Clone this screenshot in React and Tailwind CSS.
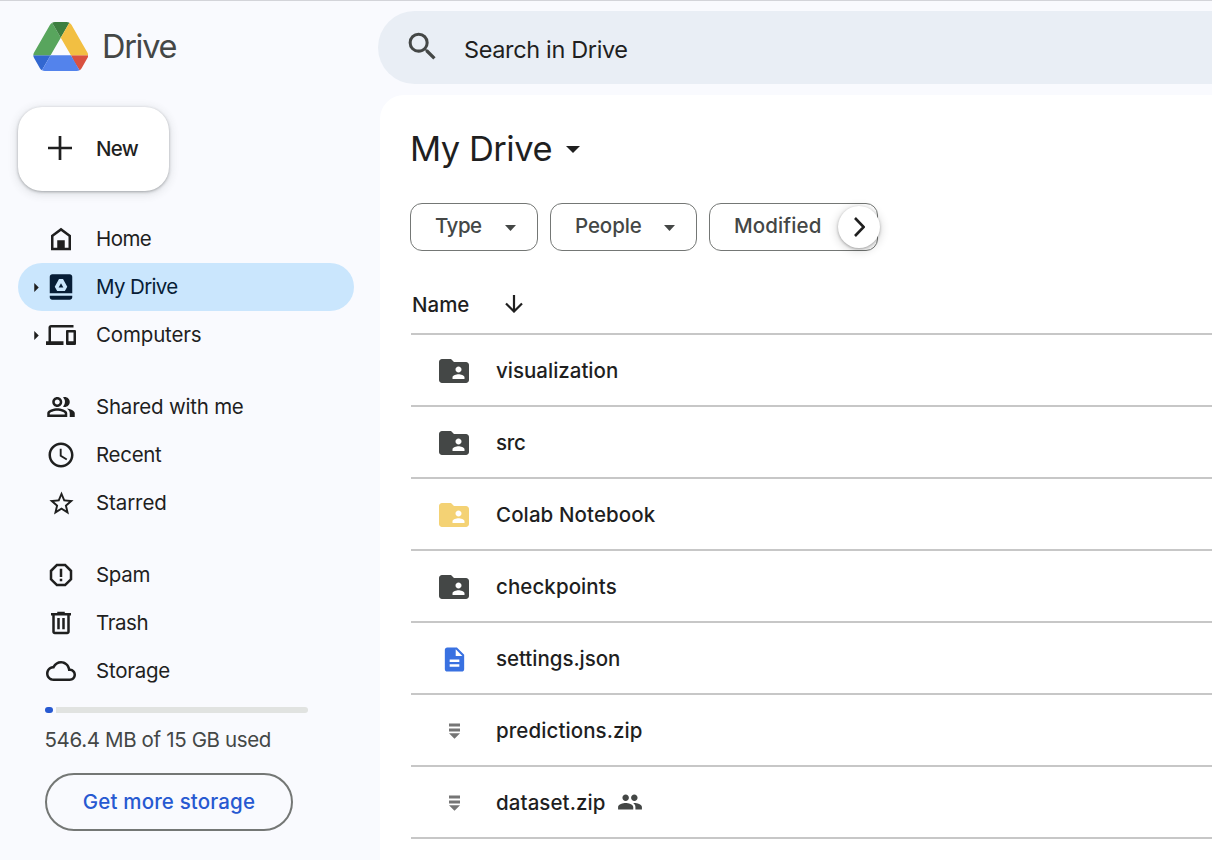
import React from "react";

const ICONS = {
  home: "M12 3L4 9v12h16V9l-8-6zm6 16h-3v-6H9v6H6v-9l6-4.5 6 4.5v9z",
  drive:
    "M5 1.8h14c1.1 0 2 .9 2 2V17H3V3.800c0-1.1.9-2 2-2zM10.400 5.500L7 11.700l1.900 3.400h6.200l1.900-3.400-3.400-6.200h-3.200zM12 9l1.900 3.400h-3.800L12 9zM3 18.900h18v1.200c0 1.100-.9 2-2 2H5c-1.100 0-2-.9-2-2v-1.200z",
  computers:
    "M4 6h18V4H4c-1.1 0-2 .9-2 2v11H0v3h14v-3H4V6zm19 2h-6c-.55 0-1 .45-1 1v10c0 .55.45 1 1 1h6c.55 0 1-.45 1-1V9c0-.55-.45-1-1-1zm-1 9h-4v-7h4v7z",
  shared:
    "M15 12c2.210 0 4-1.790 4-4s-1.790-4-4-4c-.47 0-.91.1-1.330.24a5.980 5.980 0 0 1 0 7.520c.42.14.86.24 1.330.24zM16.660 13.130C18.030 14.060 19 15.320 19 17v3h4v-3c0-2.180-3.580-3.470-6.340-3.870zM9 12c2.210 0 4-1.790 4-4s-1.790-4-4-4-4 1.790-4 4 1.790 4 4 4zm0-6c1.100 0 2 .9 2 2s-.9 2-2 2-2-.9-2-2 .9-2 2-2zM9 13c-2.670 0-8 1.340-8 4v3h16v-3c0-2.660-5.330-4-8-4zm6 5H3v-.99C3.200 16.290 6.300 15 9 15s5.800 1.290 6 2v1z",
  recent:
    "M11.990 2C6.470 2 2 6.480 2 12s4.470 10 9.990 10C17.520 22 22 17.520 22 12S17.520 2 11.990 2zM12 20c-4.420 0-8-3.580-8-8s3.580-8 8-8 8 3.580 8 8-3.580 8-8 8zm.5-13H11v6l5.250 3.150.75-1.230-4.500-2.670z",
  starred:
    "M22 9.240l-7.190-.62L12 2 9.190 8.630 2 9.240l5.460 4.730L5.820 21 12 17.270 18.180 21l-1.630-7.030L22 9.240zM12 15.400l-3.760 2.270 1-4.280-3.320-2.880 4.380-.38L12 6.100l1.710 4.040 4.380.38-3.320 2.880 1 4.280L12 15.400z",
  spam: "M15.730 3H8.270L3 8.270v7.460L8.270 21h7.460L21 15.730V8.270L15.730 3zM19 14.900L14.900 19H9.100L5 14.900V9.100L9.100 5h5.800L19 9.100v5.800zM11 7h2v6.500h-2zM11 15h2v2h-2z",
  trash:
    "M15 4V3H9v1H4v2h1v13c0 1.100.9 2 2 2h10c1.100 0 2-.9 2-2V6h1V4h-5zm2 15H7V6h10v13zM9 8h2v9H9zm4 0h2v9h-2z",
  storage:
    "M19.350 10.040C18.670 6.590 15.640 4 12 4 9.110 4 6.600 5.640 5.350 8.040 2.340 8.360 0 10.910 0 14c0 3.310 2.690 6 6 6h13c2.760 0 5-2.240 5-5 0-2.640-2.050-4.780-4.650-4.960zM19 18H6c-2.210 0-4-1.790-4-4 0-2.050 1.530-3.760 3.560-3.970l1.070-.11.5-.95C8.080 7.140 9.940 6 12 6c2.620 0 4.880 1.860 5.390 4.430l.3 1.500 1.530.11c1.560.1 2.780 1.410 2.780 2.960 0 1.650-1.350 3-3 3z",
  folder:
    "M20 6h-8l-2-2H4c-1.100 0-2 .9-2 2v12c0 1.100.9 2 2 2h16c1.100 0 2-.9 2-2V8c0-1.100-.9-2-2-2zm-5 3c1.100 0 2 .9 2 2s-.9 2-2 2-2-.9-2-2 .9-2 2-2zm4 8.300h-8v-1.200c0-1.330 2.670-2 4-2s4 .67 4 2v1.200z",
  doc: "M14 2H6c-1.100 0-2 .9-2 2v16c0 1.100.9 2 2 2h12c1.100 0 2-.9 2-2V8l-6-6zm2 16H8v-2h8v2zm0-4H8v-2h8v2zm-3-5V3.500L18.500 9H13z",
  people:
    "M16 11c1.660 0 2.990-1.340 2.990-3S17.660 5 16 5s-3 1.340-3 3 1.340 3 3 3zm-8 0c1.660 0 2.990-1.340 2.990-3S9.660 5 8 5 5 6.340 5 8s1.340 3 3 3zm0 2c-2.330 0-7 1.170-7 3.500V19h14v-2.500c0-2.330-4.670-3.500-7-3.500zm8 0c-.29 0-.62.02-.97.05 1.160.84 1.970 1.970 1.970 3.450V19h6v-2.500c0-2.330-4.670-3.500-7-3.500z",
  search:
    "M15.500 14h-.79l-.28-.27A6.471 6.471 0 0 0 16 9.500 6.500 6.500 0 1 0 9.500 16c1.610 0 3.090-.59 4.230-1.570l.27.28v.79l5 4.990L20.490 19l-4.990-5zm-6 0C7.010 14 5 11.990 5 9.500S7.010 5 9.500 5 14 7.010 14 9.500 11.990 14 9.500 14z",
};

function Icon({ name, className }) {
  return (
    <svg viewBox="0 0 24 24" className={className} fill="currentColor" fillRule="evenodd">
      <path d={ICONS[name]} />
    </svg>
  );
}

function Caret({ className }) {
  return (
    <svg viewBox="0 0 10 5" className={className} fill="currentColor" preserveAspectRatio="none">
      <path d="M0 0h10L5 5z" />
    </svg>
  );
}

function DriveLogo() {
  return (
    <svg viewBox="0 0 87.3 78" className="h-[49px] w-[55.5px] shrink-0">
      <path fill="#3267d0" d="m6.600 66.850 3.850 6.650c.8 1.400 1.950 2.500 3.300 3.300l13.750-23.800h-27.500c0 1.550.4 3.100 1.200 4.500z" />
      <path fill="#58a55d" d="m43.650 25-13.750-23.800c-1.350.8-2.500 1.900-3.300 3.300l-25.400 44a9.060 9.060 0 0 0 -1.200 4.500h27.500z" />
      <path fill="#d95140" d="m73.550 76.800c1.350-.8 2.500-1.900 3.300-3.300l1.600-2.750 7.650-13.250c.8-1.400 1.200-2.950 1.200-4.500h-27.502l5.852 11.500z" />
      <path fill="#3d7e40" d="m43.650 25 13.750-23.800c-1.350-.8-2.900-1.200-4.500-1.200h-18.500c-1.600 0-3.150.45-4.500 1.200z" />
      <path fill="#5383ec" d="m59.800 53h-32.300l-13.750 23.800c1.350.8 2.900 1.200 4.500 1.200h50.800c1.600 0 3.150-.45 4.500-1.200z" />
      <path fill="#f2bf42" d="m73.400 26.500-12.700-22c-.8-1.400-1.950-2.500-3.300-3.300l-13.750 23.800 16.150 28h27.450c0-1.550-.4-3.100-1.200-4.500z" />
    </svg>
  );
}

const NAV = [
  [
    { icon: "home", label: "Home", track: "tracking-[-0.57px]" },
    { icon: "drive", label: "My Drive", track: "tracking-[-0.64px]", active: true, expandable: true },
    { icon: "computers", label: "Computers", track: "tracking-[-0.16px]", expandable: true },
  ],
  [
    { icon: "shared", label: "Shared with me", track: "tracking-[-0.22px]" },
    { icon: "recent", label: "Recent", track: "tracking-[-0.3px]" },
    { icon: "starred", label: "Starred", track: "tracking-[-0.1px]" },
  ],
  [
    { icon: "spam", label: "Spam", track: "tracking-[-0.3px]" },
    { icon: "trash", label: "Trash", track: "tracking-[-0.4px]" },
    { icon: "storage", label: "Storage", track: "tracking-[-0.25px]" },
  ],
];

function NavItem({ icon, label, track, active, expandable }) {
  return (
    <div className={`flex h-12 w-[336px] items-center rounded-full pl-4 ${active ? "bg-[#cae6fd] text-[#071d36]" : "text-[#1f1f1f]"}`}>
      <span className="flex w-3">
        {expandable && (
          <svg viewBox="0 0 5 10" className="h-[9px] w-[5px]" fill="#1f1f1f">
            <path d="M0 0l5 5-5 5z" />
          </svg>
        )}
      </span>
      <span className="flex size-[30px] items-center justify-center">
        <Icon name={icon} className={icon === "starred" ? "size-[29px]" : "size-[30px]"} />
      </span>
      <span className={`ml-5 whitespace-nowrap ${track}`}>{label}</span>
    </div>
  );
}

function Sidebar() {
  return (
    <aside className="flex w-[378px] shrink-0 flex-col pl-[18px]">
      <div className="mt-[21px] flex h-[49px] items-center pl-[14.5px]">
        <DriveLogo />
        <span className="ml-[14px] mt-[2px] text-[32.5px] leading-none tracking-[-1.3px] text-[#444746]">Drive</span>
      </div>
      <button className="mt-[36px] flex h-[84px] w-[151px] items-center rounded-[24px] bg-white pl-[30px] text-[#1f1f1f] shadow-[0_1px_3px_rgba(60,64,67,0.4),0_2px_8px_2px_rgba(60,64,67,0.12)]">
        <svg viewBox="0 0 24 24" className="-mt-[2px] size-6" stroke="currentColor" strokeWidth="2.7">
          <path d="M12 0v24M0 12h24" />
        </svg>
        <span className="ml-6 text-[20.5px] font-medium tracking-[-0.7px]">New</span>
      </button>
      <nav className="mt-6 flex flex-col gap-6 text-[20.5px]">
        {NAV.map((group, i) => (
          <div key={i} className="flex flex-col">
            {group.map((item) => (
              <NavItem key={item.label} {...item} />
            ))}
          </div>
        ))}
      </nav>
      <div className="ml-[27px] mt-3 flex h-[6px] w-[263px] gap-[2.5px]">
        <span className="w-2 rounded-full bg-[#2759d1]" />
        <span className="flex-1 rounded-r-full bg-[#e1e3e1]" />
      </div>
      <p className="ml-[26.5px] mt-[11px] whitespace-nowrap text-[20.5px] leading-8 tracking-[-0.36px] text-[#444746]">546.4 MB of 15 GB used</p>
      <button className="ml-[27px] mt-[17px] flex h-[58px] w-[248px] items-center justify-center rounded-full border-2 border-[#747775] text-[20.5px] font-medium tracking-[0.15px] text-[#2759d1]">
        Get more storage
      </button>
    </aside>
  );
}

function Chip({ label, className, caret = true }) {
  return (
    <div className={`flex h-12 shrink-0 items-center rounded-[12px] border border-[#747775] pb-[2px] pl-6 text-[20.5px] font-medium text-[#444746] ${className}`}>
      <span className="flex-1">{label}</span>
      {caret && <Caret className="mr-[21.5px] mt-[4px] h-[6px] w-[11px]" />}
    </div>
  );
}

function ZipIcon() {
  return (
    <svg viewBox="0 0 11 16" className="h-4 w-[11px]" fill="#757575">
      <path d="M0 0.5h11v3H0zM0 5.5h11v3H0zM0 10.3h11L5.5 15.8z" />
    </svg>
  );
}

const FILES = [
  { name: "visualization", kind: "folder", track: "tracking-[0px]" },
  { name: "src", kind: "folder", track: "tracking-[-0.3px]" },
  { name: "Colab Notebook", kind: "folder", track: "tracking-[0.1px]", yellow: true },
  { name: "checkpoints", kind: "folder", track: "tracking-[0.08px]" },
  { name: "settings.json", kind: "doc", track: "tracking-[-0.04px]" },
  { name: "predictions.zip", kind: "zip", track: "tracking-[0.08px]" },
  { name: "dataset.zip", kind: "zip", track: "tracking-[0.08px]", shared: true },
];

function FileRow({ name, kind, track, yellow, shared }) {
  return (
    <div className="flex h-[72px] items-center border-b-2 border-[#c7c7c7] pl-[25px] pt-[2px]">
      <span className="flex size-9 items-center justify-center">
        {kind === "folder" && <Icon name="folder" className={`size-9 ${yellow ? "text-[#f4d274]" : "text-[#444746]"}`} />}
        {kind === "doc" && <Icon name="doc" className="size-[29px] text-[#3971e1]" />}
        {kind === "zip" && <ZipIcon />}
      </span>
      <span className={`ml-6 text-[20.5px] font-medium text-[#1f1f1f] ${track}`}>{name}</span>
      {shared && <Icon name="people" className="mb-[3px] ml-[11px] size-[26px] text-[#444746]" />}
    </div>
  );
}

export default function App() {
  return (
    <div className="flex h-[860px] w-[1212px] overflow-hidden border-t border-[#d3d4d9] bg-[#f9fafe] font-['Inter',sans-serif]">
      <Sidebar />
      <div className="flex min-w-0 flex-1 flex-col">
        <div className="mt-[10px] flex h-[73px] shrink-0 items-center rounded-l-full bg-[#e9eef5] pl-[25.5px]">
          <Icon name="search" className="-mt-[2px] size-[37px] text-[#444746]" />
          <span className="ml-[23.5px] mt-[4px] text-[23.5px] tracking-[-0.36px] text-[#1f1f1f]">Search in Drive</span>
        </div>
        <main className="ml-[2px] mt-[11px] flex flex-1 flex-col rounded-tl-[24px] bg-white pl-[31px]">
          <h1 className="mt-[32px] flex h-11 items-center text-[34.5px] leading-none tracking-[-0.5px] text-[#1f1f1f]">
            <span className="-ml-px">My Drive</span>
            <Caret className="ml-[14px] mt-px h-[7px] w-[14px]" />
          </h1>
          <div className="-ml-px mt-8 flex gap-3">
            <Chip label="Type" className="w-[128px] tracking-[-0.5px]" />
            <Chip label="People" className="w-[147px] tracking-[-0.1px]" />
            <div className="relative">
              <Chip label="Modified" className="w-[169px] tracking-[0.1px]" caret={false} />
              <button className="absolute left-[129px] top-[3px] flex size-[42px] items-center justify-center rounded-full bg-white shadow-[0_1px_3px_rgba(0,0,0,0.3),0_2px_8px_2px_rgba(0,0,0,0.12)]">
                <svg viewBox="0 0 11 20" className="h-5 w-[11px]" fill="none" stroke="#1f1f1f" strokeWidth="2.6">
                  <path d="M1 1l8.700 9L1 19" />
                </svg>
              </button>
            </div>
          </div>
          <div className="mt-[26px] flex h-[58px] shrink-0 items-center border-b-2 border-[#c7c7c7] pl-px text-[20.5px] font-medium text-[#1f1f1f]">
            <span>Name</span>
            <svg viewBox="0 0 18 18" className="-mt-[3px] ml-[35.5px] size-[18px]" fill="none" stroke="currentColor" strokeWidth="2.2">
              <path d="M9 0v16M1 8.500l8 8 8-8" />
            </svg>
          </div>
          {FILES.map((file) => (
            <FileRow key={file.name} {...file} />
          ))}
        </main>
      </div>
    </div>
  );
}
